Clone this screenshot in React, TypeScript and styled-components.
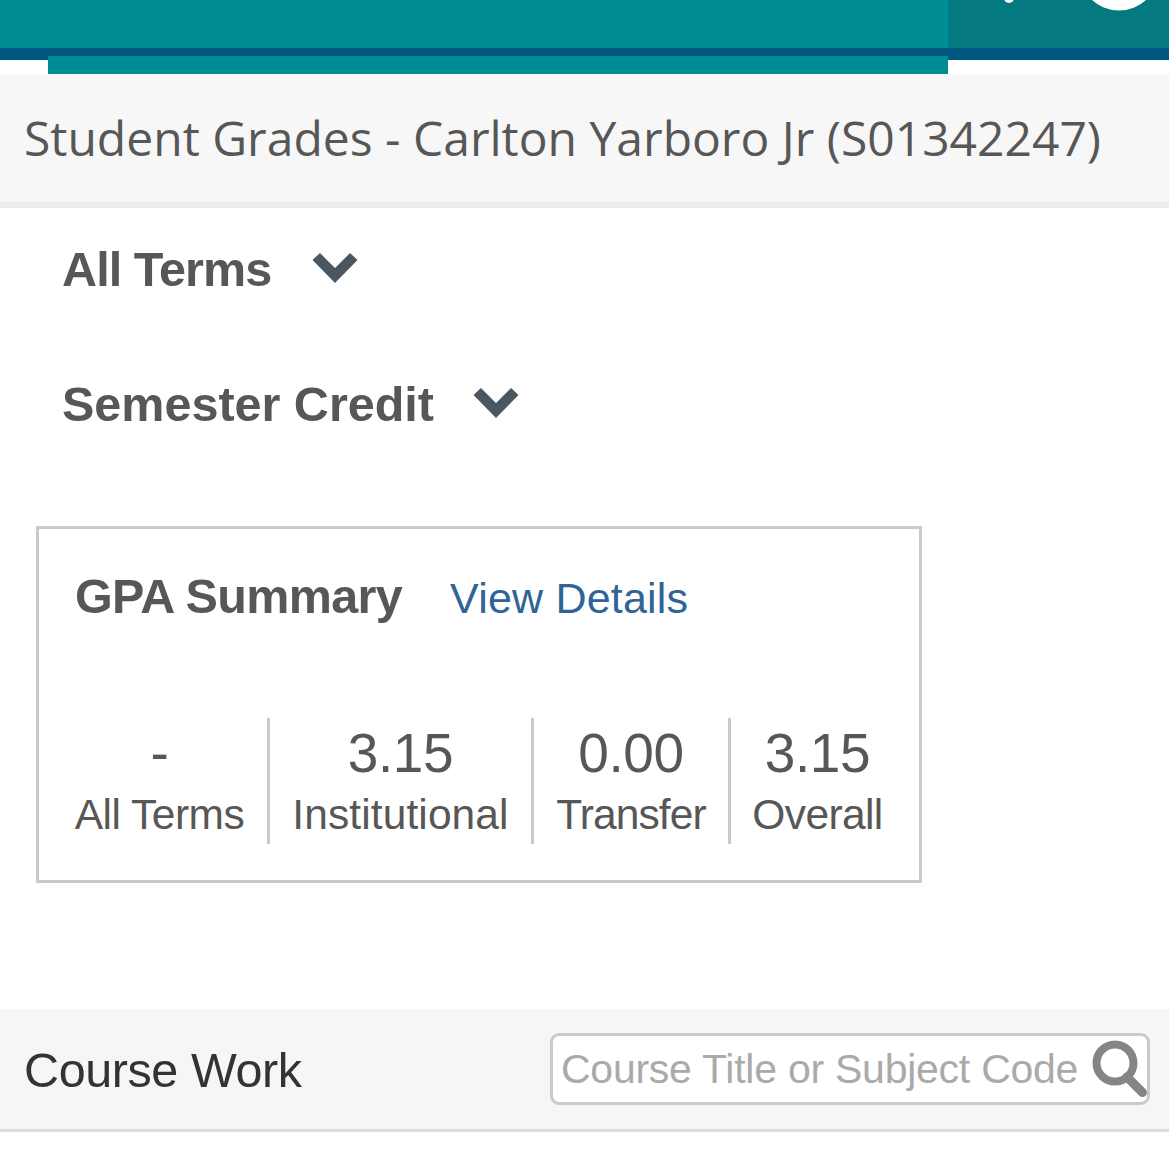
import React from "react";
import styled, { createGlobalStyle } from "styled-components";

const GlobalStyle = createGlobalStyle`
  * { box-sizing: border-box; }
  body {
    margin: 0;
    background: #fff;
    color: #575757;
    font-family: "Liberation Sans", Arial, sans-serif;
  }
  h1, h2 { margin: 0; }
`;

const Page = styled.div`
  width: 100%;
  height: 1169px;
  overflow: hidden;
`;

const TopBar = styled.header`
  position: relative;
  display: flex;
  height: 74px;
`;

const BarArea = styled.div<{ $tone: string; $width?: number }>`
  flex: ${(p) => (p.$width ? `0 0 ${p.$width}px` : "1")};
  height: 60px;
  background: ${(p) => p.$tone};
  border-bottom: 12px solid #00577f;
  overflow: hidden;
`;

const MenuStrip = styled.div`
  position: absolute;
  left: 48px;
  top: 56px;
  width: 900px;
  height: 18px;
  background: #008c95;
`;

const TitleBar = styled.div`
  display: flex;
  align-items: center;
  height: 134px;
  padding-left: 24px;
  background: #f7f7f7;
  border-bottom: 6px solid #ededf1;
`;

const PageTitle = styled.h1`
  font: 400 48px/64px "Open Sans", sans-serif;
  letter-spacing: 0;
  white-space: nowrap;
`;

const Filters = styled.div`
  display: flex;
  flex-direction: column;
  gap: 75px;
  padding: 31px 0 0 62px;
`;

const Filter = styled.div<{ $gap: number; $spacing: number }>`
  display: flex;
  align-items: center;
  gap: ${(p) => p.$gap}px;
  height: 60px;
  font-size: 48.5px;
  font-weight: 700;
  line-height: 60px;
  letter-spacing: ${(p) => p.$spacing}px;
  white-space: nowrap;
`;

const Card = styled.section`
  width: 886px;
  height: 357px;
  margin: 92px 0 0 36px;
  padding-top: 37px;
  border: 3px solid #cacaca;
`;

const CardHead = styled.div`
  display: flex;
  align-items: baseline;
  gap: 48px;
  height: 60px;
  padding-left: 36px;
  line-height: 60px;
  white-space: nowrap;
`;

const CardTitle = styled.h2`
  font-size: 48.5px;
  letter-spacing: -0.65px;
`;

const DetailsLink = styled.a`
  color: #2f6497;
  font-size: 43px;
  letter-spacing: 0.2px;
`;

const Stats = styled.div`
  display: grid;
  grid-template-columns: 218px 264px 197px 173px;
  grid-template-rows: 126px;
  margin: 92px 0 0 13px;
`;

const Stat = styled.div`
  padding-top: 5px;
  text-align: center;
  white-space: nowrap;
  &:not(:last-child) { border-right: 3px solid #cacaca; }
`;

const StatValue = styled.div`
  font-size: 55px;
  line-height: 61px;
  letter-spacing: -0.4px;
`;

const StatLabel = styled.div<{ $spacing: number }>`
  margin-top: 1px;
  font-size: 42.5px;
  line-height: 60px;
  letter-spacing: ${(p) => p.$spacing}px;
`;

const CourseBar = styled.div`
  display: flex;
  align-items: center;
  justify-content: space-between;
  height: 123px;
  margin-top: 126px;
  padding: 0 19px 0 24px;
  background: #f6f6f6;
  border-bottom: 3px solid #ddd;
`;

const CourseTitle = styled.h2`
  color: #333;
  font-size: 48.5px;
  font-weight: 400;
  line-height: 60px;
  letter-spacing: -0.4px;
  padding-top: 2px;
`;

const SearchBox = styled.label`
  display: flex;
  width: 600px;
  height: 72px;
  border: 3px solid #cacaca;
  border-radius: 9px;
  background: #fff;
`;

const SearchInput = styled.input`
  flex: 1;
  min-width: 0;
  padding: 0 0 0 8px;
  border: 0;
  outline: 0;
  background: transparent;
  font: 400 41px/60px "Liberation Sans", Arial, sans-serif;
  letter-spacing: -0.25px;
  &::placeholder { color: #aaa; opacity: 1; }
`;

const SearchIcon = styled.svg`
  flex: none;
  width: 55px;
  height: 57px;
  margin-top: 4px;
`;

const ChevronIcon = styled.svg`
  width: 46px;
  height: 30px;
  margin-bottom: 2px;
`;

const Chevron = () => (
  <ChevronIcon viewBox="0 0 46 30">
    <path d="M0.500 7L8 0L23 15L38 0L45.500 7L23 30Z" fill="#4b565f" />
  </ChevronIcon>
);

const stats = [
  { value: "-", label: "All Terms", spacing: -0.5 },
  { value: "3.15", label: "Institutional", spacing: 0.1 },
  { value: "0.00", label: "Transfer", spacing: -0.9 },
  { value: "3.15", label: "Overall", spacing: -0.6 },
];

export default function App() {
  return (
    <Page>
      <GlobalStyle />
      <TopBar>
        <BarArea $tone="#008c95" $width={948} />
        <BarArea $tone="#04797f">
          <svg width="221" height="48" viewBox="0 0 221 48">
            <circle cx="61" cy="-2" r="5" fill="#fff" />
            <circle cx="171" cy="-29.500" r="40" fill="#fff" />
          </svg>
        </BarArea>
        <MenuStrip />
      </TopBar>
      <TitleBar>
        <PageTitle>Student Grades - Carlton Yarboro Jr (S01342247)</PageTitle>
      </TitleBar>
      <Filters>
        <Filter $gap={40.5} $spacing={-0.9}>All Terms <Chevron /></Filter>
        <Filter $gap={38.5} $spacing={0}>Semester Credit <Chevron /></Filter>
      </Filters>
      <Card>
        <CardHead>
          <CardTitle>GPA Summary</CardTitle>
          <DetailsLink>View Details</DetailsLink>
        </CardHead>
        <Stats>
          {stats.map((s) => (
            <Stat key={s.label}>
              <StatValue>{s.value}</StatValue>
              <StatLabel $spacing={s.spacing}>{s.label}</StatLabel>
            </Stat>
          ))}
        </Stats>
      </Card>
      <CourseBar>
        <CourseTitle>Course Work</CourseTitle>
        <SearchBox>
          <SearchInput placeholder="Course Title or Subject Code" />
          <SearchIcon viewBox="0 0 55 57">
            <circle cx="23" cy="23" r="18.500" fill="none" stroke="#858585" strokeWidth="8" />
            <path d="M35 37L50.500 52.500" stroke="#858585" strokeWidth="9" strokeLinecap="round" />
          </SearchIcon>
        </SearchBox>
      </CourseBar>
    </Page>
  );
}
